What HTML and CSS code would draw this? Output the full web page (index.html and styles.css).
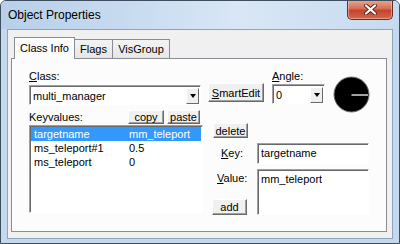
FILE: index.html
```html
<!DOCTYPE html>
<html lang="en">
  <head>
    <meta charset="UTF-8" />
    <title>Object Properties</title>
    <link rel="stylesheet" href="styles.css">
  </head>
  <body>
    <div class="window">
      <div class="titlebar">
        <span class="title">Object Properties</span>
        <div class="close">
          <svg width="13" height="11" viewBox="0 0 13 11">
            <path d="M2 1.5 L11 9.5 M11 1.5 L2 9.5" stroke="#6a2418" stroke-width="4" stroke-linecap="round" />
            <path d="M2 1.5 L11 9.5 M11 1.5 L2 9.5" stroke="#fff" stroke-width="2.2" stroke-linecap="round" />
          </svg>
        </div>
      </div>

      <div class="client">
        <div class="tabs">
          <div class="tab tab-active">Class Info</div>
          <div class="tab tab-flags">Flags</div>
          <div class="tab tab-vis">VisGroup</div>
        </div>

        <div class="panel">
          <div class="col-left">
            <span class="lbl"><u>C</u>lass:</span>
            <div class="combo class-combo">
              <span class="combo-text">multi_manager</span>
              <span class="drop"><span class="arrow"></span></span>
            </div>

            <div class="kv-head">
              <span class="lbl">Keyvalues:</span>
              <div class="btn btn-copy">copy</div>
              <div class="btn btn-paste">paste</div>
            </div>

            <div class="listbox">
              <div class="row selected"><span class="key">targetname</span><span>mm_teleport</span></div>
              <div class="row"><span class="key">ms_teleport#1</span><span>0.5</span></div>
              <div class="row"><span class="key">ms_teleport</span><span>0</span></div>
            </div>
          </div>

          <div class="col-right">
            <div class="top-row">
              <div class="btn btn-smart"><u>S</u>martEdit</div>
              <div class="angle-group">
                <span class="lbl"><u>A</u>ngle:</span>
                <div class="combo angle-combo">
                  <span class="combo-text">0</span>
                  <span class="drop"><span class="arrow"></span></span>
                </div>
              </div>
              <div class="dial">
                <svg width="37" height="37" viewBox="0 0 37 37">
                  <circle cx="18.5" cy="18.5" r="17.5" fill="#000" stroke="#777" stroke-width="1" />
                  <path d="M18.5 19 L35 19" stroke="#d8d8d8" stroke-width="1.4" />
                </svg>
              </div>
            </div>

            <div class="btn btn-delete">delete</div>

            <div class="kv-edit">
              <span class="lbl key-lbl"><u>K</u>ey:</span>
              <div class="field key-field">targetname</div>
              <div class="value-side">
                <span class="lbl value-lbl"><u>V</u>alue:</span>
                <div class="btn btn-add">add</div>
              </div>
              <div class="field value-field">mm_teleport</div>
            </div>
          </div>
        </div>
      </div>
    </div>
  </body>
</html>
```

FILE: styles.css
```css
* {
  margin: 0;
  padding: 0;
  box-sizing: border-box;
}

body {
  width: 400px;
  height: 244px;
  overflow: hidden;
  font-family: "Liberation Sans", Arial, sans-serif;
  font-size: 11px;
  color: #000;
  background: #fff;
}

u {
  text-decoration: underline;
  text-underline-offset: 1px;
}

.window {
  width: 400px;
  height: 244px;
  border: 1px solid #3f4d5e;
  border-radius: 6px 6px 0 0;
  background: #c4d8ee;
  display: flex;
  flex-direction: column;
  overflow: hidden;
}

.titlebar {
  height: 28px;
  display: flex;
  align-items: flex-start;
  background: linear-gradient(to right, #b7cfe9, #c9dcf0 35%, #d9e7f5 60%, #c6daef);
}

.title {
  font-size: 12px;
  line-height: 28px;
  padding-left: 7px;
}

.close {
  margin-left: auto;
  margin-right: 6px;
  margin-top: -1px;
  width: 46px;
  height: 20px;
  border: 1px solid #6b2b24;
  border-top: none;
  border-radius: 0 0 5px 5px;
  background: linear-gradient(#e9a893, #d66e55 45%, #c2452d 55%, #d4674c);
  display: flex;
  align-items: center;
  justify-content: center;
  box-shadow: inset 0 0 0 1px rgba(255, 210, 200, 0.5);
}

.client {
  flex: 1;
  margin: 0 6px 4px 6px;
  border: 1px solid #8fa3ba;
  background: #f0f0f0;
  padding: 7px 5px 6px 3px;
  display: flex;
  flex-direction: column;
}

.tabs {
  display: flex;
  height: 21px;
  padding-left: 3px;
}

.tab {
  height: 19px;
  margin-top: 2px;
  border: 1px solid #898c95;
  border-bottom: none;
  border-left: none;
  background: linear-gradient(#f3f3f3, #e6e6e6);
  text-align: center;
  line-height: 18px;
}

.tab-active {
  width: 61px;
  height: 22px;
  margin-top: 0;
  margin-bottom: -1px;
  border-left: 1px solid #898c95;
  background: #fcfcfc;
  line-height: 20px;
  position: relative;
  z-index: 1;
}

.tab-flags {
  width: 38px;
}

.tab-vis {
  width: 57px;
}

.panel {
  flex: 1;
  border: 1px solid #898c95;
  background: #fcfcfc;
  display: flex;
  padding: 11px 0 0 17px;
}

.lbl {
  line-height: 13px;
}

.col-left {
  width: 174px;
  display: flex;
  flex-direction: column;
}

.combo,
.listbox,
.field {
  border: 1px solid;
  border-color: #a0a0a0 #fff #fff #a0a0a0;
  box-shadow: inset 1px 1px 0 #696969;
  background: #fff;
}

.combo {
  height: 20px;
  display: flex;
  align-items: center;
  padding: 1px 1px 0 2px;
}

.class-combo {
  margin-top: 2px;
  margin-right: 2px;
}

.combo-text {
  flex: 1;
  padding-left: 1px;
}

.drop {
  width: 13px;
  height: 16px;
  border: 1px solid;
  border-color: #fff #696969 #696969 #fff;
  background: #f0f0f0;
  display: flex;
  align-items: center;
  justify-content: center;
}

.arrow {
  width: 0;
  height: 0;
  border-left: 3.5px solid transparent;
  border-right: 3.5px solid transparent;
  border-top: 4px solid #000;
}

.kv-head {
  display: flex;
  align-items: flex-end;
  margin-top: 5px;
  margin-bottom: 1px;
  height: 14px;
}

.btn {
  border: 1px solid;
  border-color: #fff #696969 #696969 #fff;
  box-shadow: inset -1px -1px 0 #a0a0a0;
  background: #f0f0f0;
  display: flex;
  align-items: center;
  justify-content: center;
  line-height: 12px;
}

.btn-copy {
  margin-left: auto;
  width: 36px;
  height: 14px;
}

.btn-paste {
  margin-left: 3px;
  margin-right: 3px;
  width: 33px;
  height: 14px;
}

.listbox {
  height: 88px;
  padding: 1px 1px 0 1px;
}

.row {
  display: flex;
  height: 14px;
  line-height: 14px;
  padding-left: 3px;
}

.row .key {
  width: 95px;
}

.selected {
  background: #3399ff;
  color: #fff;
}

.col-right {
  margin-left: 5px;
  display: flex;
  flex-direction: column;
}

.top-row {
  display: flex;
  align-items: flex-start;
}

.btn-smart {
  margin-top: 13px;
  width: 56px;
  height: 19px;
}

.angle-group {
  margin-left: 8px;
  width: 53px;
  display: flex;
  flex-direction: column;
}

.angle-combo {
  margin-top: 1px;
}

.dial {
  margin-left: 8px;
  margin-top: 6px;
  width: 37px;
  height: 37px;
}

.btn-delete {
  margin-left: 5px;
  margin-top: 10px;
  width: 35px;
  height: 15px;
}

.kv-edit {
  display: grid;
  grid-template-columns: 45px 112px;
  row-gap: 5px;
  margin-left: 4px;
  margin-top: 5px;
}

.key-lbl {
  padding-left: 9px;
  align-self: center;
}

.field {
  padding: 3px 0 0 3px;
}

.key-field {
  height: 21px;
}

.value-side {
  display: flex;
  flex-direction: column;
}

.value-lbl {
  padding-left: 5px;
  margin-top: 3px;
}

.btn-add {
  margin-top: auto;
  width: 35px;
  height: 16px;
}

.value-field {
  height: 46px;
}
```
